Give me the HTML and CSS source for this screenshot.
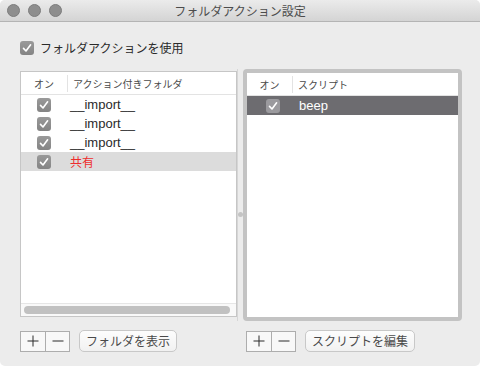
FILE: index.html
```html
<!DOCTYPE html>
<html lang="ja">
<head>
    <meta charset="UTF-8">
    <meta name="viewport" content="width=device-width, initial-scale=1.0">
    <title>フォルダアクション設定</title>
    <link rel="stylesheet" href="styles.css">
</head>
<body>
    <div class="window">
        <div class="titlebar">
            <div class="lights">
                <span class="light"></span>
                <span class="light"></span>
                <span class="light"></span>
            </div>
            <div class="title">フォルダアクション設定</div>
        </div>

        <div class="content">
            <label class="enable">
                <span class="check"><svg viewBox="0 0 14 14"><path d="M3.5 7.4 L6 10 L10.6 3.8" /></svg></span>
                フォルダアクションを使用
            </label>

            <div class="panes">
                <!-- folders -->
                <div class="pane pane-left">
                    <div class="table">
                        <div class="thead">
                            <div class="col-on">オン</div>
                            <div class="col-name">アクション付きフォルダ</div>
                        </div>
                        <div class="tbody">
                            <div class="row">
                                <div class="col-on"><span class="check"><svg viewBox="0 0 14 14"><path d="M3.5 7.4 L6 10 L10.6 3.8" /></svg></span></div>
                                <div class="col-name">__import__</div>
                            </div>
                            <div class="row">
                                <div class="col-on"><span class="check"><svg viewBox="0 0 14 14"><path d="M3.5 7.4 L6 10 L10.6 3.8" /></svg></span></div>
                                <div class="col-name">__import__</div>
                            </div>
                            <div class="row">
                                <div class="col-on"><span class="check"><svg viewBox="0 0 14 14"><path d="M3.5 7.4 L6 10 L10.6 3.8" /></svg></span></div>
                                <div class="col-name">__import__</div>
                            </div>
                            <div class="row row-inactive">
                                <div class="col-on"><span class="check"><svg viewBox="0 0 14 14"><path d="M3.5 7.4 L6 10 L10.6 3.8" /></svg></span></div>
                                <div class="col-name missing">共有</div>
                            </div>
                        </div>
                        <div class="scrollbar"><span class="thumb"></span></div>
                    </div>
                    <div class="actions">
                        <div class="segmented">
                            <button class="seg" title="追加"><svg viewBox="0 0 12 12"><path d="M6 0.5 V11.5 M0.5 6 H11.5" /></svg></button>
                            <button class="seg" title="削除"><svg viewBox="0 0 12 12"><path d="M0.5 6 H11.5" /></svg></button>
                        </div>
                        <button class="btn">フォルダを表示</button>
                    </div>
                </div>

                <div class="splitter"><span class="grip"></span></div>

                <!-- scripts -->
                <div class="pane pane-right">
                    <div class="table table-focus">
                        <div class="thead">
                            <div class="col-on">オン</div>
                            <div class="col-name">スクリプト</div>
                        </div>
                        <div class="tbody">
                            <div class="row row-selected">
                                <div class="col-on"><span class="check"><svg viewBox="0 0 14 14"><path d="M3.5 7.4 L6 10 L10.6 3.8" /></svg></span></div>
                                <div class="col-name">beep</div>
                            </div>
                        </div>
                    </div>
                    <div class="actions">
                        <div class="segmented">
                            <button class="seg" title="追加"><svg viewBox="0 0 12 12"><path d="M6 0.5 V11.5 M0.5 6 H11.5" /></svg></button>
                            <button class="seg" title="削除"><svg viewBox="0 0 12 12"><path d="M0.5 6 H11.5" /></svg></button>
                        </div>
                        <button class="btn">スクリプトを編集</button>
                    </div>
                </div>
            </div>
        </div>
    </div>
</body>
</html>
```

FILE: styles.css
```css
html, body {
    margin: 0;
    padding: 0;
    width: 480px;
    height: 366px;
    background: #ffffff;
    overflow: hidden;
}
body {
    font-family: "Noto Sans CJK JP", "Liberation Sans", sans-serif;
    color: #2a2a2a;
}
.window {
    width: 480px;
    height: 366px;
    background: #ececec;
    border-radius: 5px;
    overflow: hidden;
}

/* title bar */
.titlebar {
    height: 21px;
    border-bottom: 1px solid #b4b4b4;
    background: linear-gradient(#ebebeb, #d4d4d4);
    display: flex;
    align-items: center;
    position: relative;
}
.lights {
    display: flex;
    gap: 8px;
    padding-left: 7px;
    margin-top: -1px;
}
.light {
    width: 11px;
    height: 11px;
    border-radius: 50%;
    background: #8e8e8e;
    border: 0.5px solid #7c7c7c;
}
.title {
    position: absolute;
    left: 0;
    right: 0;
    top: 2px;
    text-align: center;
    font-size: 12px;
    line-height: 17px;
    color: #4c4c4c;
}

/* content */
.content {
    padding: 19px 18px 0 20px;
}
.enable {
    display: flex;
    align-items: center;
    gap: 6px;
    font-size: 12px;
    line-height: 14px;
    height: 14px;
    color: #2a2a2a;
}
.check {
    width: 14px;
    height: 14px;
    border-radius: 3px;
    background: linear-gradient(#9a9a9a, #848484);
    display: inline-flex;
    align-items: center;
    justify-content: center;
    flex: none;
}
.check svg {
    width: 14px;
    height: 14px;
}
.check path {
    fill: none;
    stroke: #ffffff;
    stroke-width: 1.6;
    stroke-linecap: round;
    stroke-linejoin: round;
}

.panes {
    display: flex;
    margin-top: 14px;
    align-items: flex-start;
}
.pane {
    display: flex;
    flex-direction: column;
}
.pane-left {
    width: 217px;
    margin-top: 2px;
}
.pane-right {
    width: 219px;
}
.splitter {
    width: 6px;
    height: 252px;
    display: flex;
    justify-content: center;
    border-left: 1px solid #d6d6d6;
    box-sizing: border-box;
}
.grip {
    width: 5px;
    height: 5px;
    border-radius: 50%;
    background: #c4c4c4;
    margin-top: 143px;
}

/* tables */
.table {
    background: #ffffff;
    border: 1px solid #c6c6c6;
    height: 244px;
    display: flex;
    flex-direction: column;
}
.table-focus {
    border: 4px solid #c3c3c3;
    border-radius: 4px;
}
.thead {
    height: 22px;
    border-bottom: 1px solid #e3e3e3;
    display: flex;
    align-items: center;
    font-size: 10px;
    color: #4a4a4a;
}
.thead .col-on {
    width: 46px;
    text-align: center;
    border-right: 1px solid #e3e3e3;
    height: 17px;
    line-height: 17px;
}
.thead .col-name {
    padding-left: 5px;
}
.table-focus .thead .col-on {
    width: 45px;
}
.tbody {
    flex: 1;
}
.row {
    height: 19px;
    display: flex;
    align-items: center;
}
.row .col-on {
    width: 46px;
    display: flex;
    justify-content: center;
}
.row .col-name {
    padding-left: 3px;
    font-family: "Liberation Sans", "Noto Sans CJK JP", sans-serif;
    font-size: 13px;
    color: #2a2a2a;
}
.row .col-name.missing {
    font-family: "Noto Sans CJK JP", sans-serif;
    font-size: 12px;
    color: #ee2c2c;
}
.row-inactive {
    background: #dcdcdc;
}
.row-selected {
    background: #6d6c70;
}
.row-selected .col-on {
    width: 45px;
    padding-left: 3px;
}
.row-selected .check {
    background: #9b9a9e;
}
.row-selected .col-name {
    color: #ffffff;
    padding-left: 4px;
}

.scrollbar {
    height: 13px;
    border-top: 1px solid #e6e6e6;
    background: #f9f9f9;
    padding: 2px 6px 0 3px;
    box-sizing: border-box;
}
.thumb {
    display: block;
    height: 8px;
    border-radius: 4px;
    background: #c1c1c1;
}

/* buttons */
.actions {
    display: flex;
    align-items: center;
    gap: 9px;
    margin-top: 13px;
}
.pane-right .actions {
    margin-top: 9px;
    padding-left: 3px;
}
.segmented {
    display: flex;
    border: 1px solid #adadad;
    background: #f8f8f8;
}
.seg {
    width: 24px;
    height: 19px;
    border: none;
    background: none;
    padding: 0;
    display: flex;
    align-items: center;
    justify-content: center;
}
.seg svg {
    width: 12px;
    height: 12px;
}
.seg path {
    stroke: #2a2a2a;
    stroke-width: 1;
    fill: none;
}
.seg + .seg {
    border-left: 1px solid #adadad;
}
.btn {
    height: 22px;
    padding: 0 6px;
    border: 1px solid #c8c8c8;
    border-radius: 5px;
    background: linear-gradient(#fdfdfd, #f1f1f1);
    font-family: "Noto Sans CJK JP", sans-serif;
    font-size: 12px;
    color: #4a4a4a;
    line-height: 20px;
}
```
